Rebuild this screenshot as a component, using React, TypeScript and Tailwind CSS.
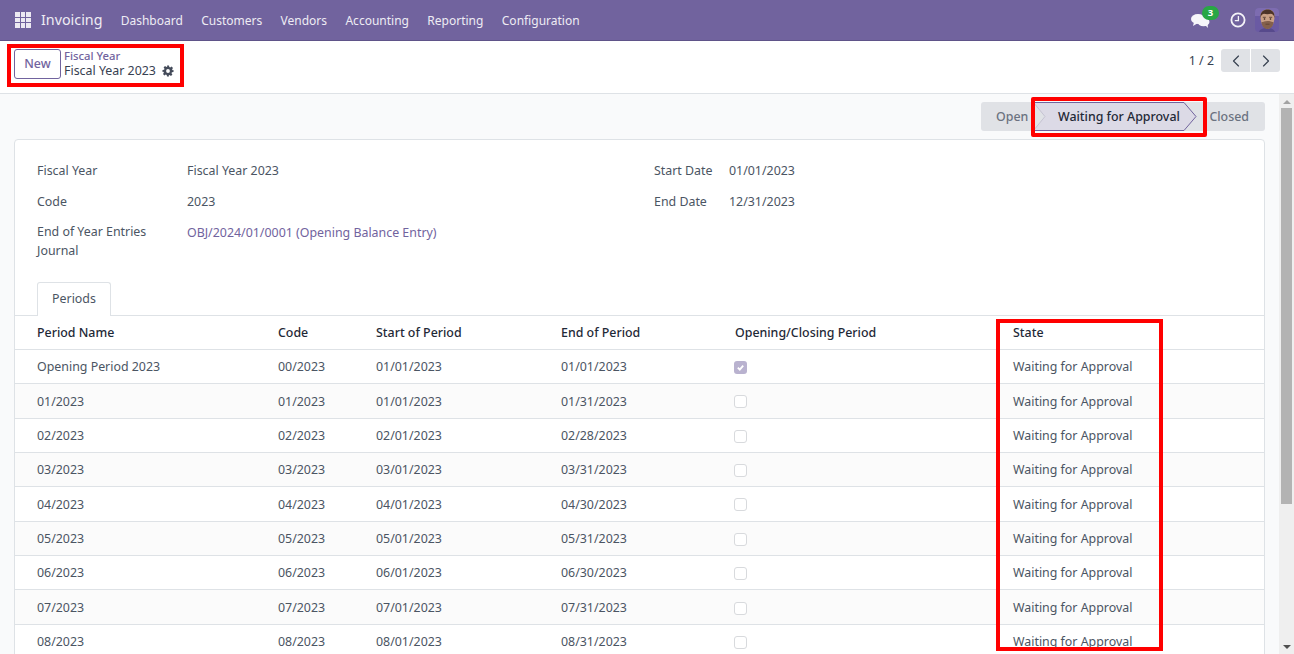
import { ChevronLeft, ChevronRight } from "lucide-react";

const menus = ["Dashboard", "Customers", "Vendors", "Accounting", "Reporting", "Configuration"];

const rows = [
  ["Opening Period 2023", "00/2023", "01/01/2023", "01/01/2023", true],
  ["01/2023", "01/2023", "01/01/2023", "01/31/2023", false],
  ["02/2023", "02/2023", "02/01/2023", "02/28/2023", false],
  ["03/2023", "03/2023", "03/01/2023", "03/31/2023", false],
  ["04/2023", "04/2023", "04/01/2023", "04/30/2023", false],
  ["05/2023", "05/2023", "05/01/2023", "05/31/2023", false],
  ["06/2023", "06/2023", "06/01/2023", "06/30/2023", false],
  ["07/2023", "07/2023", "07/01/2023", "07/31/2023", false],
  ["08/2023", "08/2023", "08/01/2023", "08/31/2023", false],
] as const;

const cols = "grid grid-cols-[241px_98px_185px_174px_278px_1fr] pl-[22px] pt-[2px] items-center";

const AppsIcon = () => (
  <div className="grid grid-cols-3 gap-[1px] w-[16px] h-[16px]">
    {Array.from({ length: 9 }).map((_, i) => (
      <div key={i} className="bg-[#ece9f2]" />
    ))}
  </div>
);

const Gear = () => (
  <svg width="12" height="12" viewBox="0 0 24 24" fill="#444b5a">
    <path d="M10 1h4l.6 3.200 1.900.8 2.700-1.800 2.800 2.800-1.800 2.700.8 1.900L23 10v4l-3.200.6-.8 1.900 1.800 2.700-2.800 2.800-2.700-1.800-1.900.8L14 23h-4l-.6-3.200-1.900-.8-2.700 1.800-2.800-2.800 1.800-2.700-.8-1.900L1 14v-4l3.200-.6.8-1.900-1.800-2.700 2.800-2.800 2.700 1.800 1.900-.8L10 1zm2 7.200a3.800 3.800 0 1 0 0 7.600 3.800 3.800 0 0 0 0-7.600z" fillRule="evenodd" />
  </svg>
);

const Chat = () => (
  <svg width="19" height="16" viewBox="0 0 19 16" fill="#f7f6fa">
    <ellipse cx="7" cy="6" rx="7" ry="5" />
    <path d="M3 9l-1 4 5-3z" />
    <ellipse cx="12.500" cy="9" rx="6" ry="4.200" />
    <path d="M14 12l3 3-.5-4z" />
  </svg>
);

const Clock = () => (
  <svg width="16" height="16" viewBox="0 0 16 16" fill="none" stroke="#f4f3f8">
    <circle cx="8" cy="8" r="6.600" strokeWidth="1.800" />
    <path d="M8.400 4v4.600H4.800" strokeWidth="1.300" />
  </svg>
);

const Avatar = () => (
  <svg width="24" height="24" viewBox="0 0 24 24" className="rounded-[4px]">
    <rect width="24" height="24" fill="#6a5aa3" />
    <path d="M0 0h24v8H0z" fill="#7d6cb0" />
    <path d="M4 24c1-3 4-4 8-4s7 1 8 4z" fill="#574a8c" />
    <path d="M5.500 8.500C5.500 3.500 8.500 1.500 12.500 1.500s7 2 7 7c0 6-2.500 12-7 12s-7-6-7-12z" fill="#c9a085" />
    <path d="M5.500 10C5 4 8.500 1.500 12.500 1.500S20 4 19.500 10c-.6-2.500-1.500-4-3.500-4.200-2.500.6-5 .6-7 0C7 6 6 7.500 5.500 10z" fill="#4d3428" />
    <path d="M6.500 14c1.500.5 2.500-1 6-1s4.500 1.500 6 1c-.3 4-2.500 7-6 7s-5.700-3-6-7z" fill="#84604c" />
    <path d="M10.500 16.200h4" stroke="#5a3d2e" strokeWidth="0.800" />
    <path d="M7.800 9.300h3M14.200 9.300h3" stroke="#4d3428" strokeWidth="0.800" />
    <circle cx="9.500" cy="11" r="0.800" fill="#2b1c16" />
    <circle cx="15.500" cy="11" r="0.800" fill="#2b1c16" />
  </svg>
);

const Check = ({ on }: { on: boolean }) =>
  on ? (
    <div className="ml-[-1px] w-[13px] h-[13px] rounded-[3px] bg-[#b9b2cf] flex items-center justify-center">
      <svg width="9" height="9" viewBox="0 0 10 10" fill="none" stroke="#fff" strokeWidth="2">
        <path d="M2 5.200l2.200 2.200L8 3" />
      </svg>
    </div>
  ) : (
    <div className="ml-[-1px] w-[13px] h-[13px] rounded-[3px] border border-[#d8dadd] bg-white" />
  );

export default function App() {
  return (
    <div className="relative h-[654px] w-[1294px] overflow-hidden bg-[#f9fafb] text-[12.400px] text-[#4b5563] font-['Noto_Sans',sans-serif]">
      <header className="flex h-[41px] items-center bg-[#71639e] border-b border-[#5f5389] pl-[15px] pr-[15px] text-[#eeecf4]">
        <AppsIcon />
        <span className="ml-[10px] text-[14.300px]">Invoicing</span>
        <nav className="ml-[9px] flex pt-[1px] text-[12px]">
          {menus.map((m) => (
            <span key={m} className="px-[9.200px]">{m}</span>
          ))}
        </nav>
        <div className="ml-auto flex items-center">
          <div className="relative mr-[20px] mt-[2px]">
            <Chat />
            <span className="absolute left-[11px] top-[-7px] h-[14px] w-[17px] rounded-full bg-[#28a745] text-center text-[9.500px] leading-[14px] font-bold text-white">3</span>
          </div>
          <Clock />
          <div className="ml-[9px]"><Avatar /></div>
        </div>
      </header>

      <div className="flex h-[53px] items-start justify-between border-b border-[#dee2e6] bg-white pl-[14px] pr-[14px] pt-[8px]">
        <div className="flex items-start">
          <button className="h-[30px] w-[47px] rounded-[3px] border border-[#71639e] bg-white text-center font-medium text-[#71639e]">New</button>
          <div className="ml-[3px] leading-[14px]">
            <div className="text-[11.300px] text-[#71639e] font-medium">Fiscal Year</div>
            <div className="mt-[1px] flex items-center gap-[6px] text-[#374151]">
              Fiscal Year 2023 <Gear />
            </div>
          </div>
        </div>
        <div className="flex items-center">
          <span className="mr-[7px] pt-[1px] text-[#374151]">1 / 2</span>
          <div className="flex gap-[1px]">
            <div className="flex h-[23px] w-[29px] items-center justify-center rounded-l-[3px] bg-[#e0e2e6]">
              <ChevronLeft size={20} strokeWidth={1.400} className="text-[#374151]" />
            </div>
            <div className="flex h-[23px] w-[29px] items-center justify-center rounded-r-[3px] bg-[#e0e2e6]">
              <ChevronRight size={20} strokeWidth={1.400} className="text-[#374151]" />
            </div>
          </div>
        </div>
      </div>

      <main className="pl-[14px] pr-[29px]">
        <div className="flex h-[45px] justify-end pt-[8px]">
          <div className="relative flex h-[29px] w-[284px] items-center rounded-[3px] bg-[#e0e2e6] pt-[1px] font-medium text-[#6b7280]">
            <span className="ml-[15px]">Open</span>
            <span className="ml-auto mr-[16px]">Closed</span>
            <div className="absolute left-[52px] top-0 h-[29px] w-[164px]">
              <svg width="164" height="29" viewBox="0 0 164 29" className="absolute inset-0">
                <path d="M0.500 0.500H151L163 14.500L151 28.500H0.500L12 14.500z" fill="#dcdae6" />
                <path d="M0.500 0.500H151L163 14.500L151 28.500H0.500" fill="none" stroke="#71639e" />
                <path d="M0.500 0.500L12 14.500L0.500 28.500" fill="none" stroke="#c5c3d2" />
              </svg>
              <span className="absolute left-[25px] top-[6px] whitespace-nowrap text-[#1f2937]">Waiting for Approval</span>
            </div>
          </div>
        </div>

        <section className="rounded-t-[4px] border border-[#dee2e6] bg-white">
          <div className="flex pl-[22px] pt-[16px]">
            <div className="w-[617px]">
              <div className="flex h-[31px] items-center">
                <span className="w-[150px]">Fiscal Year</span>
                <span>Fiscal Year 2023</span>
              </div>
              <div className="flex h-[31px] items-center">
                <span className="w-[150px]">Code</span>
                <span>2023</span>
              </div>
              <div className="flex pt-[4px]">
                <span className="w-[150px] leading-[19px]">End of Year Entries<br />Journal</span>
                <span className="pt-[1px] leading-[19px] text-[#71639e]">OBJ/2024/01/0001 (Opening Balance Entry)</span>
              </div>
            </div>
            <div>
              <div className="flex h-[31px] items-center">
                <span className="w-[75px]">Start Date</span>
                <span>01/01/2023</span>
              </div>
              <div className="flex h-[31px] items-center">
                <span className="w-[75px]">End Date</span>
                <span>12/31/2023</span>
              </div>
            </div>
          </div>

          <div className="mt-[22px] flex h-[34px] border-b border-[#dee2e6] pl-[22px]">
            <div className="flex h-[34px] w-[74px] items-center justify-center rounded-t-[3px] border border-b-0 border-[#dee2e6] bg-white text-[#4b5563]">Periods</div>
          </div>

          <div className={`${cols} h-[33.800px] border-b border-[#dee2e6] font-medium text-[#1f2937]`}>
            <span>Period Name</span>
            <span>Code</span>
            <span>Start of Period</span>
            <span>End of Period</span>
            <span>Opening/Closing Period</span>
            <span>State</span>
          </div>

          {rows.map((r, i) => (
            <div
              key={r[0]}
              className={`${cols} h-[34.375px] border-b border-[#dee2e6] ${i % 2 === 1 ? "bg-[#fbfbfb]" : "bg-white"}`}
            >
              <span>{r[0]}</span>
              <span>{r[1]}</span>
              <span>{r[2]}</span>
              <span>{r[3]}</span>
              <span><Check on={r[4]} /></span>
              <span>Waiting for Approval</span>
            </div>
          ))}
        </section>
      </main>

      {/* scrollbar */}
      <div className="absolute right-0 top-[94px] bottom-0 flex w-[15px] flex-col items-center bg-[#efefef]">
        <div className="mt-[6px] h-0 w-0 border-x-[4px] border-b-[4px] border-x-transparent border-b-[#a3a3a3]" />
        <div className="mt-[4px] h-[396px] w-[11px] bg-[#b3b3b3]" />
        <div className="mt-auto mb-[5px] h-0 w-0 border-x-[4px] border-t-[4px] border-x-transparent border-t-[#505050]" />
      </div>

      {/* red annotation boxes */}
      <div className="absolute left-[7px] top-[44px] h-[43px] w-[177px] border-[4px] border-[#ff0000]" />
      <div className="absolute left-[1031px] top-[97px] h-[40px] w-[176px] rounded-[2px] border-[4px] border-[#ff0000]" />
      <div className="absolute left-[996px] top-[319px] h-[332px] w-[167px] border-[4px] border-[#ff0000]" />
    </div>
  );
}
